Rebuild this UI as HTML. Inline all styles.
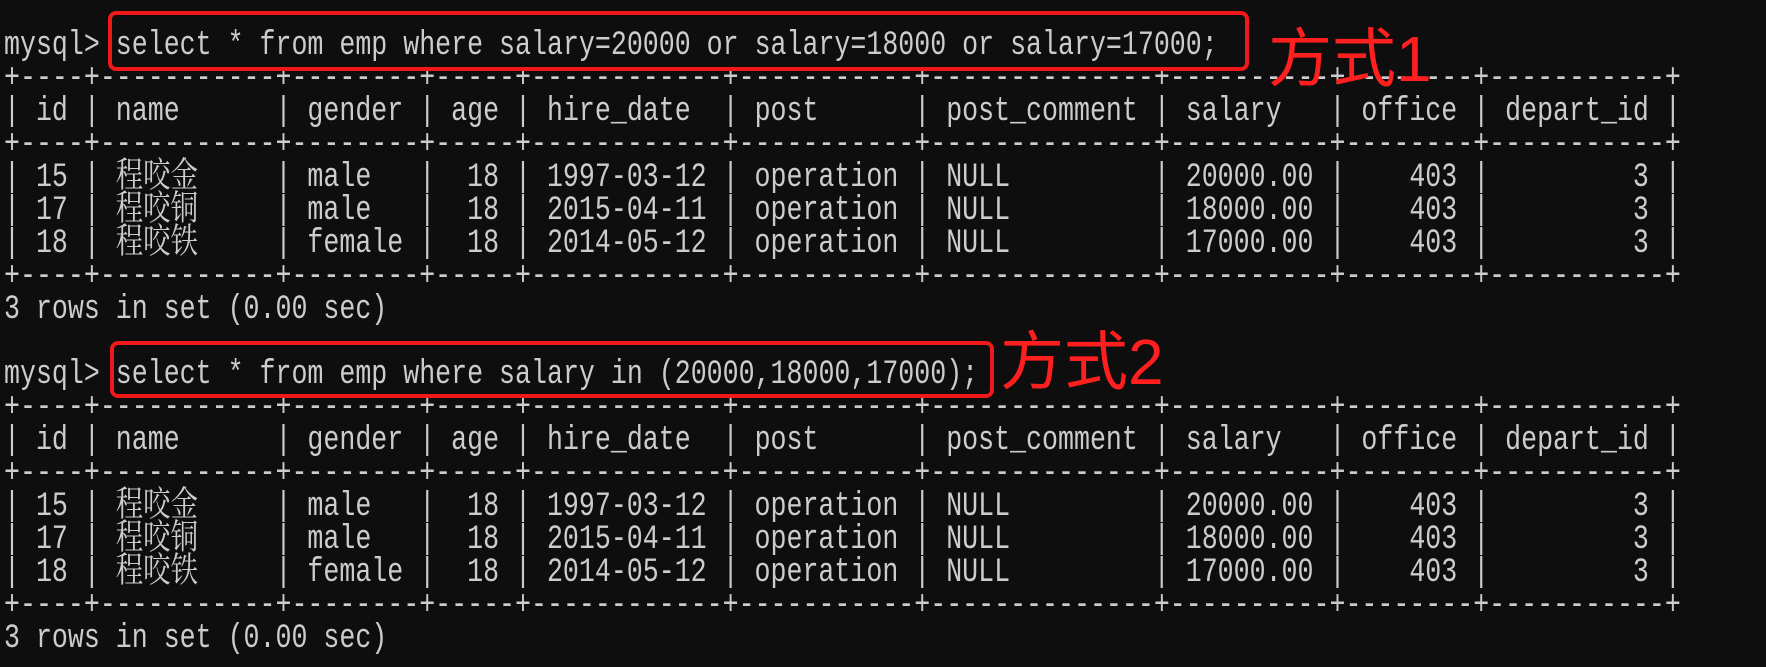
<!DOCTYPE html>
<html><head><meta charset="utf-8"><style>
body{margin:0;width:1766px;height:667px;background:#0e0e0e;overflow:hidden;position:relative}
.l{position:absolute;left:4px;height:33px;line-height:33px;white-space:pre;font-family:"Liberation Mono",monospace;font-size:34px;color:#cccccc;transform:scaleX(0.7827);transform-origin:0 50%}
.c{display:inline-block;width:122.4px;font-family:"Noto Serif CJK SC","Noto Sans CJK SC",serif;font-size:35px;letter-spacing:0;vertical-align:top;line-height:33px;position:relative;top:-5px}
.box{position:absolute;border:4px solid #f01818;border-radius:8px}
.ann{position:absolute;color:#ff1f1f;font-family:"Liberation Sans","Noto Sans CJK SC",sans-serif;font-size:64px;line-height:64px}
</style></head><body>
<div class="l" style="top:30px">mysql&gt; select * from emp where salary=20000 or salary=18000 or salary=17000;</div>
<div class="l" style="top:63px">+----+-----------+--------+-----+------------+-----------+--------------+----------+--------+-----------+</div>
<div class="l" style="top:96px">| id | name      | gender | age | hire_date  | post      | post_comment | salary   | office | depart_id |</div>
<div class="l" style="top:129px">+----+-----------+--------+-----+------------+-----------+--------------+----------+--------+-----------+</div>
<div class="l" style="top:162px">| 15 | <span class="c">程咬金</span>    | male   |  18 | 1997-03-12 | operation | NULL         | 20000.00 |    403 |         3 |</div>
<div class="l" style="top:195px">| 17 | <span class="c">程咬铜</span>    | male   |  18 | 2015-04-11 | operation | NULL         | 18000.00 |    403 |         3 |</div>
<div class="l" style="top:228px">| 18 | <span class="c">程咬铁</span>    | female |  18 | 2014-05-12 | operation | NULL         | 17000.00 |    403 |         3 |</div>
<div class="l" style="top:261px">+----+-----------+--------+-----+------------+-----------+--------------+----------+--------+-----------+</div>
<div class="l" style="top:294px">3 rows in set (0.00 sec)</div>
<div class="l" style="top:359px">mysql&gt; select * from emp where salary in (20000,18000,17000);</div>
<div class="l" style="top:392px">+----+-----------+--------+-----+------------+-----------+--------------+----------+--------+-----------+</div>
<div class="l" style="top:425px">| id | name      | gender | age | hire_date  | post      | post_comment | salary   | office | depart_id |</div>
<div class="l" style="top:458px">+----+-----------+--------+-----+------------+-----------+--------------+----------+--------+-----------+</div>
<div class="l" style="top:491px">| 15 | <span class="c">程咬金</span>    | male   |  18 | 1997-03-12 | operation | NULL         | 20000.00 |    403 |         3 |</div>
<div class="l" style="top:524px">| 17 | <span class="c">程咬铜</span>    | male   |  18 | 2015-04-11 | operation | NULL         | 18000.00 |    403 |         3 |</div>
<div class="l" style="top:557px">| 18 | <span class="c">程咬铁</span>    | female |  18 | 2014-05-12 | operation | NULL         | 17000.00 |    403 |         3 |</div>
<div class="l" style="top:590px">+----+-----------+--------+-----+------------+-----------+--------------+----------+--------+-----------+</div>
<div class="l" style="top:623px">3 rows in set (0.00 sec)</div>
<div class="box" style="left:108px;top:11px;width:1133px;height:52px"></div>
<div class="box" style="left:110px;top:341px;width:876px;height:49px"></div>
<div class="ann" style="left:1268px;top:27px">方式1</div>
<div class="ann" style="left:1000px;top:330px">方式2</div>
</body></html>
